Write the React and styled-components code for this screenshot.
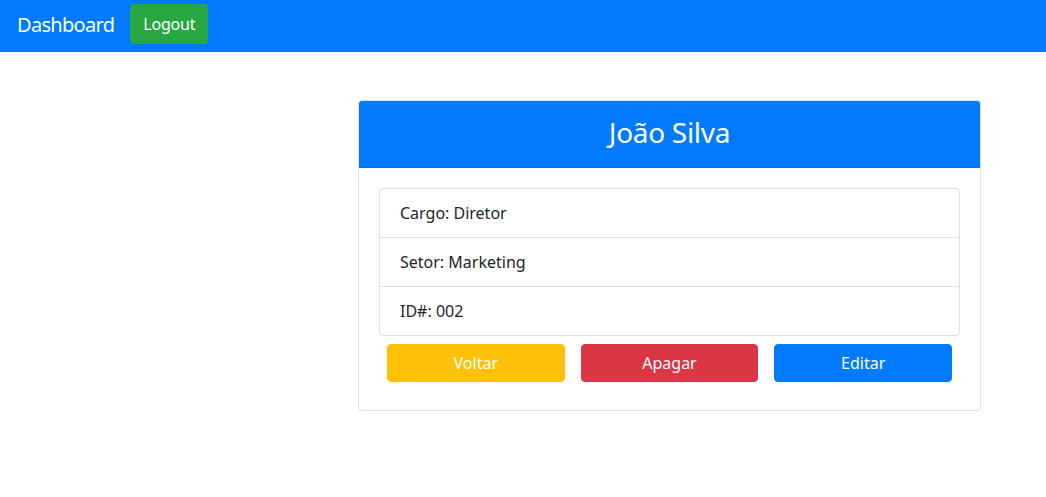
import React from "react";
import styled, { createGlobalStyle } from "styled-components";

const Global = createGlobalStyle`
  * { box-sizing: border-box; }
  body {
    margin: 0;
    font-family: "Noto Sans", "Open Sans", sans-serif;
    font-size: 16px;
    line-height: 1.5;
    color: #212529;
    background: #fff;
  }
`;

const Navbar = styled.nav`
  height: 52px;
  background: #007bff;
  display: flex;
  align-items: center;
  padding: 0 16px 4px 17px;
  gap: 16px;
`;

const Brand = styled.span`
  color: #fff;
  font-size: 20px;
  line-height: 1;
  letter-spacing: -0.7px;
  padding-top: 2px;
`;

const Button = styled.button`
  border: 1px solid ${(p) => p.$bg};
  background: ${(p) => p.$bg};
  color: #fff;
  font-family: inherit;
  font-size: 16px;
  line-height: 1.5;
  border-radius: 4px;
  height: ${(p) => p.$h || 38}px;
  padding: 0 12px;
  letter-spacing: ${(p) => (p.$tight ? "-0.2px" : "0")};
  cursor: pointer;
`;

const Main = styled.main`
  padding: 48px 0 0 358px;
`;

const Card = styled.section`
  width: 623px;
  border: 1px solid rgba(0, 0, 0, 0.125);
  border-radius: 4px;
  overflow: hidden;
`;

const CardHeader = styled.header`
  height: 67px;
  background: #007bff;
  color: #fff;
  display: flex;
  align-items: center;
  justify-content: center;
  font-size: 28px;
  letter-spacing: -0.3px;
  padding-bottom: 4px;
  border-bottom: 1px solid rgba(0, 0, 0, 0.125);
`;

const CardBody = styled.div`
  padding: 20px 20px 28px;
`;

const List = styled.ul`
  list-style: none;
  margin: 0;
  padding: 0;
  border: 1px solid rgba(0, 0, 0, 0.125);
  border-radius: 4px;
`;

const Item = styled.li`
  padding: 12px 20px;
  font-size: 16px;
  line-height: 24px;
  & + & {
    border-top: 1px solid rgba(0, 0, 0, 0.125);
  }
`;

const Actions = styled.div`
  display: grid;
  grid-template-columns: repeat(3, 1fr);
  gap: 16px;
  padding: 0 8px;
  margin-top: 8px;
`;

export default function App() {
  return (
    <>
      <Global />
      <Navbar>
        <Brand>Dashboard</Brand>
        <Button $bg="#28a745" $h={40} $tight>Logout</Button>
      </Navbar>
      <Main>
        <Card>
          <CardHeader>João Silva</CardHeader>
          <CardBody>
            <List>
              <Item>Cargo: Diretor</Item>
              <Item>Setor: Marketing</Item>
              <Item>ID#: 002</Item>
            </List>
            <Actions>
              <Button $bg="#ffc107">Voltar</Button>
              <Button $bg="#dc3545">Apagar</Button>
              <Button $bg="#007bff">Editar</Button>
            </Actions>
          </CardBody>
        </Card>
      </Main>
    </>
  );
}
